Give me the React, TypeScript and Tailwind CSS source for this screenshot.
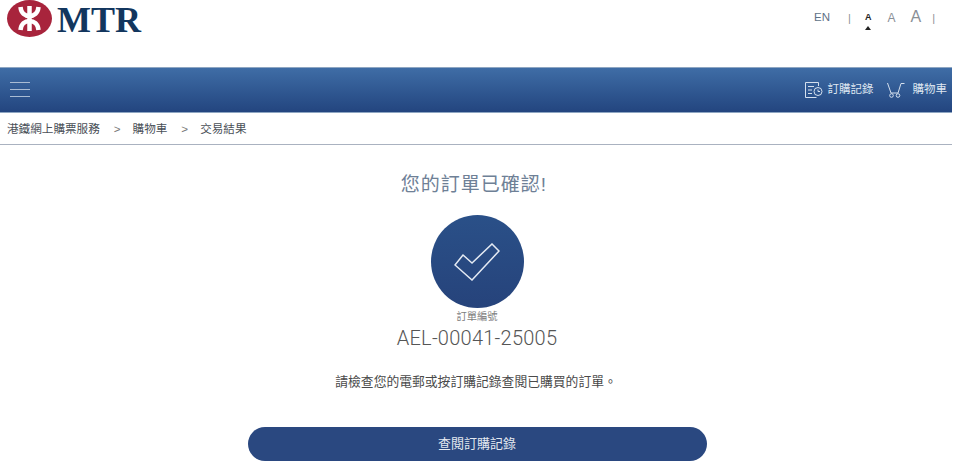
const cjk = "font-['Liberation_Sans','Noto_Sans_CJK_TC',sans-serif]";

function MtrMark() {
  return (
    <svg width="45" height="37" viewBox="0 0 45 37">
      <ellipse cx="22.5" cy="18.5" rx="22.5" ry="18.5" fill="#a8243c" />
      <g fill="none" stroke="#fff" strokeWidth="4.5">
        <path d="M22.5 6v25" />
        <path d="M13.500 7C14 13 18 16 22.500 16S31 13 31.500 7" />
        <path d="M13.500 30C14 24 18 21 22.500 21S31 24 31.500 30" />
      </g>
    </svg>
  );
}

function OrdersIcon() {
  return (
    <svg width="18" height="18" viewBox="0 0 18 18" fill="none" stroke="#d5e0ee" strokeWidth="1">
      <path d="M13.500 5V1.500H.5v15h11" />
      <path d="M3 5.500h6M3 9h4M3 12.500h4" />
      <circle cx="13" cy="10.500" r="4" />
      <path d="M13 8.500v2h2" />
    </svg>
  );
}

function CartIcon() {
  return (
    <svg width="18" height="16" viewBox="0 0 18 16" fill="none" stroke="#d5e0ee" strokeWidth="1">
      <path d="M.5 1l3.500 10h7L14 1.500h3.500" />
      <circle cx="4.500" cy="13.500" r="1.800" />
      <circle cx="11" cy="13.500" r="1.800" />
    </svg>
  );
}

export default function App() {
  return (
    <div className={`w-[969px] h-[475px] overflow-hidden bg-white ${cjk}`}>
      <div className="w-[952px]">
        {/* Header */}
        <div className="h-[67px] flex items-start justify-between">
          <div className="flex items-start pl-[7px] gap-[5px]">
            <MtrMark />
            <span className="text-[36px] leading-[40px] font-bold text-[#12365e] font-['Liberation_Serif',serif]">
              MTR
            </span>
          </div>
          <div className="flex items-center h-[36px] mr-[17px] text-[#8a8f96] font-['Liberation_Sans',sans-serif]">
            <span className="text-[11.5px] text-[#5f7288] mr-[18px]">EN</span>
            <span className="text-[11px] mr-[14px]">|</span>
            <span className="relative text-[9px] font-bold text-[#222] mr-[16px]">
              A
              <span className="absolute left-[0px] top-[15px] w-0 h-0 border-x-[3px] border-x-transparent border-b-[4px] border-b-[#222]" />
            </span>
            <span className="text-[12px] mr-[15px]">A</span>
            <span className="text-[16px] mr-[11px] -mt-[3px]">A</span>
            <span className="text-[11px]">|</span>
          </div>
        </div>

        {/* Nav bar */}
        <div className="h-[46px] flex items-center justify-between bg-gradient-to-b from-[#3f6da6] to-[#23457f] border-y border-[#8ea6c2]">
          <div className="ml-[10px] mb-[1px] w-[20px] flex flex-col gap-[6px]">
            <div className="h-px bg-[#a9bcd4]" />
            <div className="h-px bg-[#a9bcd4]" />
            <div className="h-px bg-[#a9bcd4]" />
          </div>
          <div className="flex items-center text-[11.500px] text-[#dfe7f1] mr-[5px]">
            <OrdersIcon />
            <span className="ml-[5px] mr-[13px]">訂購記錄</span>
            <CartIcon />
            <span className="ml-[8px]">購物車</span>
          </div>
        </div>

        {/* Breadcrumb */}
        <div className="h-[32px] flex items-center pl-[7px] text-[11.600px] text-[#4a4f57] border-b border-[#aab2c0]">
          <span>港鐵網上購票服務</span>
          <span className="ml-[14px] mr-[12px] text-[#777]">&gt;</span>
          <span>購物車</span>
          <span className="ml-[14px] mr-[12px] text-[#777]">&gt;</span>
          <span>交易結果</span>
        </div>

        {/* Result */}
        <div className="flex flex-col items-center pl-[2px]">
          <h1 className="mt-[27px] mr-[6px] text-[19px] leading-[26px] tracking-[1px] font-normal text-[#6e8096]">您的訂單已確認!</h1>
          <div className="mt-[17px] w-[93px] h-[93px] rounded-full bg-gradient-to-b from-[#2a5088] to-[#26437b] flex items-center justify-center">
            <svg width="46" height="38" viewBox="0 0 46 38" fill="none" stroke="#e4eaf3" strokeWidth="1.500">
              <path d="M1 22l8-10 9 8L38 1l7 7-27 29z" />
            </svg>
          </div>
          <div className="mt-[2px] text-[10.300px] leading-[14px] text-[#7d7d7d]">訂單編號</div>
          <div className="mt-[2px] text-[20px] leading-[24px] text-[#555] font-['Roboto',sans-serif] font-light tracking-[0.25px]">AEL-00041-25005</div>
          <p className="mt-[23px] mr-[2px] text-[12.800px] leading-[18px] text-[#4a4a4a]">請檢查您的電郵或按訂購記錄查閱已購買的訂單。</p>
          <button className="mt-[36px] w-[459px] h-[34px] rounded-full bg-[#2a4880] text-[13px] text-[#e3e8f0]">查閱訂購記錄</button>
        </div>
      </div>
    </div>
  );
}
